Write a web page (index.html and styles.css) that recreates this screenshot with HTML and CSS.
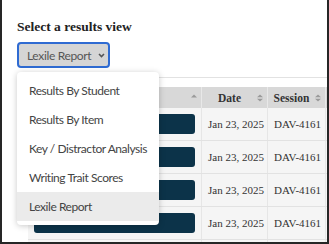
FILE: index.html
```html
<!DOCTYPE html>
<html lang="en">
<head>
    <meta charset="UTF-8">
    <title>Results view</title>
    <link rel="stylesheet" href="styles.css">
</head>
<body>

<div class="frame">
    <div class="panel">
        <h2 class="panel_title">Select a results view</h2>

        <div class="view-select">
            <button class="view-select_button">
                Lexile Report
                <svg class="view-select_caret" width="7" height="5" viewBox="0 0 7 5"><path d="M1 1 L3.5 3.5 L6 1" fill="none" stroke="#555" stroke-width="1.6"/></svg>
            </button>
            <ul class="view-select_menu">
                <li class="view-select_item">Results By Student</li>
                <li class="view-select_item">Results By Item</li>
                <li class="view-select_item">Key / Distractor Analysis</li>
                <li class="view-select_item">Writing Trait Scores</li>
                <li class="view-select_item active">Lexile Report</li>
            </ul>
        </div>

        <div class="results-table">
            <div class="results-table_head">
                <div class="results-table_th">
                    <span class="results-table_label"></span>
                    <svg class="sort-icon" width="6" height="8" viewBox="0 0 6 8"><path d="M0 3.5 L3 0.5 L6 3.5 Z" fill="#9a9a9a"/></svg>
                </div>
                <div class="results-table_th">
                    <span class="results-table_label">Date</span>
                    <svg class="sort-icon" width="6" height="8" viewBox="0 0 6 8"><path d="M0 3.3 L3 0.5 L6 3.3 Z M0 4.7 L3 7.5 L6 4.7 Z" fill="#9a9a9a"/></svg>
                </div>
                <div class="results-table_th">
                    <span class="results-table_label">Session</span>
                    <svg class="sort-icon" width="6" height="8" viewBox="0 0 6 8"><path d="M0 3.3 L3 0.5 L6 3.3 Z M0 4.7 L3 7.5 L6 4.7 Z" fill="#9a9a9a"/></svg>
                </div>
                <div class="results-table_th"></div>
            </div>

            <div class="results-table_row">
                <div class="results-table_td"><span class="student-bar"></span></div>
                <div class="results-table_td">Jan 23, 2025</div>
                <div class="results-table_td">DAV-4161</div>
                <div class="results-table_td"></div>
            </div>
            <div class="results-table_row">
                <div class="results-table_td"><span class="student-bar"></span></div>
                <div class="results-table_td">Jan 23, 2025</div>
                <div class="results-table_td">DAV-4161</div>
                <div class="results-table_td"></div>
            </div>
            <div class="results-table_row">
                <div class="results-table_td"><span class="student-bar"></span></div>
                <div class="results-table_td">Jan 23, 2025</div>
                <div class="results-table_td">DAV-4161</div>
                <div class="results-table_td"></div>
            </div>
            <div class="results-table_row">
                <div class="results-table_td"><span class="student-bar"></span></div>
                <div class="results-table_td">Jan 23, 2025</div>
                <div class="results-table_td">DAV-4161</div>
                <div class="results-table_td"></div>
            </div>
            <div class="results-table_row">
                <div class="results-table_td"><span class="student-bar"></span></div>
                <div class="results-table_td"></div>
                <div class="results-table_td"></div>
                <div class="results-table_td"></div>
            </div>
        </div>
    </div>
</div>

</body>
</html>
```

FILE: styles.css
```css
body {
    margin: 0;
    background: #fff;
}

.frame {
    width: 329px;
    height: 244px;
    box-sizing: border-box;
    border: 2px solid #262626;
    border-top: none;
    overflow: hidden;
    background: #fff;
}

.panel {
    padding: 19px 0 0 15px;
}

.panel_title {
    margin: 0;
    font-family: "Liberation Serif", serif;
    font-size: 13.5px;
    line-height: 16px;
    font-weight: bold;
    color: #222;
}

.view-select {
    position: relative;
    margin-top: 7px;
    width: 93px;
}

.view-select_button {
    display: flex;
    align-items: center;
    gap: 7px;
    width: 93px;
    height: 26px;
    box-sizing: border-box;
    padding: 0 0 0 8px;
    border: 2px solid #2f6bd2;
    border-radius: 4px;
    background: #d5d5d5;
    color: #555;
    font-family: Lato, sans-serif;
    font-size: 12px;
    letter-spacing: -0.35px;
    white-space: nowrap;
}

.view-select_caret {
    flex: none;
}

.view-select_menu {
    position: absolute;
    top: 30px;
    left: 0;
    z-index: 2;
    width: 142px;
    margin: 0;
    padding: 4px 0;
    list-style: none;
    background: #fff;
    border-radius: 4px;
    box-shadow: 0 1px 6px rgba(0, 0, 0, 0.22);
}

.view-select_item {
    height: 29px;
    line-height: 29px;
    padding-left: 12px;
    color: #444;
    font-family: Lato, sans-serif;
    font-size: 12px;
    letter-spacing: -0.45px;
    white-space: nowrap;
}

.view-select_item.active {
    background: #ebebeb;
}

.results-table {
    margin: 9px 0 0 11px;
    padding-top: 9px;
    border-top: 1px solid #e2e2e2;
    font-family: "Liberation Serif", serif;
    color: #333;
}

.results-table_head,
.results-table_row {
    display: grid;
    grid-template-columns: 174px 66px 58px 60px;
}

.results-table_head {
    height: 21px;
    background: #d8d8d8;
}

.results-table_th {
    display: flex;
    align-items: center;
    padding-right: 4px;
    border-right: 1px solid #e8e8e8;
    font-size: 11.5px;
    font-weight: bold;
}

.results-table_label {
    flex: 1;
    text-align: center;
}

.sort-icon {
    flex: none;
}

.results-table_row {
    height: 33px;
    box-sizing: border-box;
    background: #f5f5f5;
    border-bottom: 1px solid #e2e2e2;
}

.results-table_td {
    display: flex;
    align-items: center;
    padding: 0 6px;
    border-right: 1px solid #e6e6e6;
    font-size: 11px;
    white-space: nowrap;
}

.student-bar {
    display: block;
    width: 100%;
    height: 20px;
    background: #0c3349;
    border-radius: 3px;
}
```
